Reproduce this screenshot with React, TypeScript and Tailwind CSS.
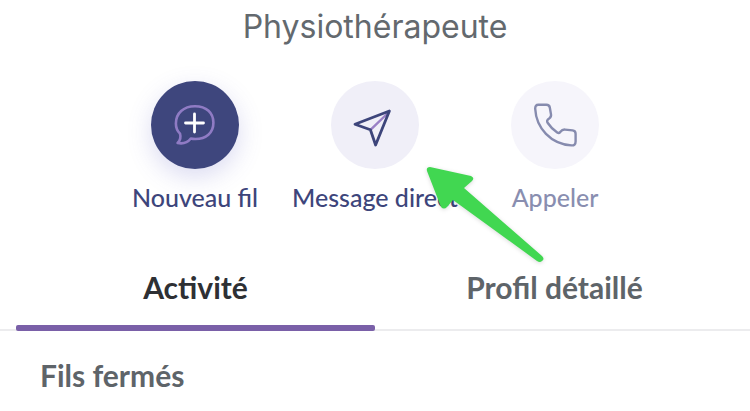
import type { ReactNode } from "react";

function NewThreadIcon() {
  return (
    <svg viewBox="0 0 44 44" className="size-11" fill="none" strokeLinecap="round" strokeLinejoin="round" aria-hidden="true">
      <path
        d="M7 30.6 C4 27.6 2.9 24.4 2.9 20.4 C2.9 10.2 10.5 3.2 22 3.2 C33.5 3.2 40.4 10 40.4 19.8 C40.4 30 33 36 22.4 36 C20.8 36 19.3 35.9 17.8 35.5 C14.6 39.6 9.4 41 4.6 40 C7.4 37.4 8 34 7 30.6 Z"
        stroke="#8f7bc4"
        strokeWidth="2.6"
      />
      <path d="M21.5 11 V29 M12.5 20 H30.5" stroke="#ffffff" strokeWidth="2.8" />
    </svg>
  );
}

function SendIcon() {
  return (
    <svg viewBox="0 0 44 44" className="size-11" fill="none" strokeLinecap="round" strokeLinejoin="round" aria-hidden="true">
      <path d="M36 9 L18 26.4" stroke="#9a80c6" strokeWidth="2.4" />
      <path d="M36.4 8 L2 21.2 L17.4 26.8 L22.6 42 Z" stroke="#3d457b" strokeWidth="2.8" />
    </svg>
  );
}

function PhoneIcon() {
  return (
    <svg viewBox="0 0 44 44" className="size-11" fill="none" strokeLinecap="round" strokeLinejoin="round" aria-hidden="true">
      <path
        d="M5.4 1.8 H13.4 C15.4 1.8 16.5 2.7 16.8 4.5 L18 11.4 C18.3 13.2 17.7 14.3 16.4 15.2 C13.8 16.9 13.6 18.2 14.8 20 C17.4 24 20.4 27 24.2 29.6 C25.4 30.4 26.4 30.2 27.2 29 C28.8 27 30 26.4 32 26.6 L39.6 27.4 C41.6 27.6 42.6 28.8 42.6 30.8 V38.4 C42.6 41.2 41.2 42.6 38.4 42.4 C17.8 41 3.2 25.2 2.2 5.8 C2.1 3.2 3.2 1.8 5.4 1.8 Z"
        stroke="#868bae"
        strokeWidth="2.4"
      />
    </svg>
  );
}

function Action({ icon, label, circle, text }: { icon: ReactNode; label: string; circle: string; text: string }) {
  return (
    <button type="button" className="flex w-45 flex-col items-center gap-2.5">
      <span className={`flex size-22 items-center justify-center rounded-full ${circle}`}>{icon}</span>
      <span className={`text-[25px] leading-9 font-medium whitespace-nowrap ${text}`}>{label}</span>
    </button>
  );
}

function Pointer() {
  return (
    <svg viewBox="0 0 120 100" className="pointer-events-none absolute top-[84px] left-[321px] w-[120px] drop-shadow-sm" aria-hidden="true">
      <path
        d="M4 2 L45 11 Q49 13 46 16 L38 23 L116 91 Q119 94 116 96 Q114 98 111 96 L27 35 L21 42 Q18 45 15 42 L1 6 Q0 2 4 2 Z"
        fill="#41d751"
      />
    </svg>
  );
}

export default function App() {
  return (
    <main className="overflow-hidden bg-white pb-4 font-['Lato',sans-serif]">
      <h1 className="pt-1 text-center font-['Inter',sans-serif] text-[32px] leading-[46px] font-normal text-[#63696e]">
        Physiothérapeute
      </h1>

      <div className="relative mx-auto mt-[31px] flex w-[540px] justify-center">
        <Action icon={<NewThreadIcon />} label="Nouveau fil" circle="bg-[#3e467d] shadow-[0_8px_24px_rgba(90,90,190,0.22)]" text="text-[#3d457b]" />
        <Action icon={<SendIcon />} label="Message direct" circle="bg-[#f0eff8]" text="text-[#3d457b]" />
        <Action icon={<PhoneIcon />} label="Appeler" circle="bg-[#f6f5fb]" text="text-[#898eb0]" />
        <Pointer />
      </div>

      <div role="tablist" className="mt-8 flex border-b-2 border-[#ececee] px-4 text-[30px] leading-10 font-bold">
        <button type="button" role="tab" aria-selected="true" className="-mb-0.5 flex-1 text-[#2e3034]">
          <span className="block pt-5 pb-[18px]">Activité</span>
          <span className="block h-1.5 rounded-xs bg-[#7a60a8]" />
        </button>
        <button type="button" role="tab" aria-selected="false" className="-mb-0.5 flex-1 text-[#5e6469]">
          <span className="block pt-5 pb-[18px]">Profil détaillé</span>
          <span className="block h-1.5" />
        </button>
      </div>

      <h2 className="px-10 pt-6 text-[30px] leading-10 font-bold text-[#5e6469]">Fils fermés</h2>
    </main>
  );
}
